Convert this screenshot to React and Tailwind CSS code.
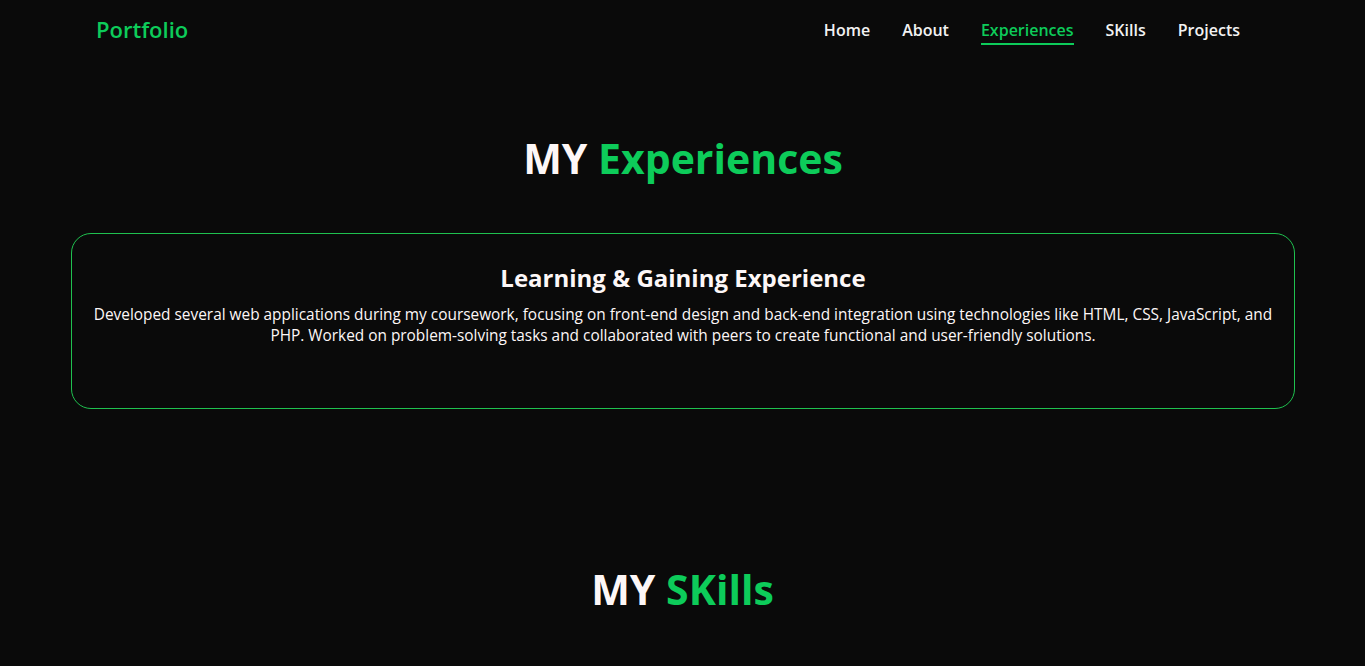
import React from 'react';

const links = ['Home', 'About', 'Experiences', 'SKills', 'Projects'];

const App = () => {
  return (
    <div className="min-h-screen bg-[#0a0a0a] text-[#fdf7f7] font-['Open_Sans',sans-serif]">
      {/* navbar */}
      <nav className="flex items-center justify-between h-[58px] pl-[96px] pr-[125px]">
        <a className="text-[22px] font-semibold text-[#0dcc5a]">Portfolio</a>
        <ul className="flex items-center gap-[32px]">
          {links.map(link => (
            <li key={link}>
              <a
                className={
                  link === 'Experiences'
                    ? 'block text-[16px] font-semibold text-[#0dcc5a] border-b-2 border-[#0dcc5a] pt-[4px] pb-[1px]'
                    : 'block text-[16px] font-semibold text-[#f2f2f2] pt-[4px] pb-[3px]'
                }
              >
                {link}
              </a>
            </li>
          ))}
        </ul>
      </nav>

      {/* experiences */}
      <section className="pt-[72px] pl-[71px] pr-[70px]">
        <h2 className="text-center text-[41px] font-bold leading-[56px]">
          MY <span className="text-[#0dcc5a]">Experiences</span>
        </h2>
        <div className="mt-[47px] h-[176px] border border-[#1fc14f] rounded-[20px] px-[12px] pt-[28px] text-center">
          <h3 className="text-[24px] font-bold leading-[32px]">Learning &amp; Gaining Experience</h3>
          <p className="mt-[10px] text-[15.4px] leading-[21px]">
            Developed several web applications during my coursework, focusing on front-end design and back-end integration using technologies like HTML, CSS, JavaScript, and PHP. Worked on problem-solving tasks and collaborated with peers to create functional and user-friendly solutions.
          </p>
        </div>
      </section>

      {/* skills */}
      <section className="pt-[152px]">
        <h2 className="text-center text-[41px] font-bold leading-[56px]">
          MY <span className="text-[#0dcc5a]">SKills</span>
        </h2>
      </section>
    </div>
  );
};

export default App;
